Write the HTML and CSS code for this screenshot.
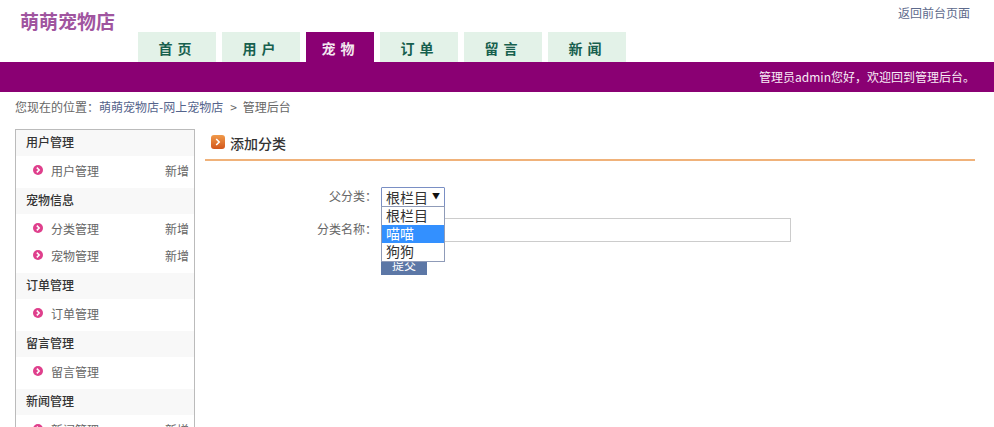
FILE: index.html
```html
<!DOCTYPE html>
<html lang="zh-CN">
<head>
<meta charset="utf-8">
<title>萌萌宠物店</title>
<link rel="stylesheet" href="styles.css">
</head>
<body>
<header class="top">
  <div class="brand">萌萌宠物店</div>
  <nav class="tabs">
    <a class="tab">首 页</a>
    <a class="tab">用 户</a>
    <a class="tab tab-active">宠 物</a>
    <a class="tab">订 单</a>
    <a class="tab">留 言</a>
    <a class="tab">新 闻</a>
  </nav>
  <a class="back">返回前台页面</a>
</header>
<div class="bar">管理员admin您好，欢迎回到管理后台。</div>
<div class="crumb">您现在的位置：<a class="link">萌萌宠物店-网上宠物店</a><span class="sep">&gt;</span>管理后台</div>
<div class="main">
  <aside class="side">
    <h3 class="group">用户管理</h3>
    <ul class="items">
      <li class="item"><svg class="dot" viewBox="0 0 10 10"><circle cx="5" cy="5" r="5"/><path d="M3.8 2.6 6.2 5 3.8 7.4"/></svg><span class="name">用户管理</span><span class="add">新增</span></li>
    </ul>
    <h3 class="group">宠物信息</h3>
    <ul class="items">
      <li class="item"><svg class="dot" viewBox="0 0 10 10"><circle cx="5" cy="5" r="5"/><path d="M3.8 2.6 6.2 5 3.8 7.4"/></svg><span class="name">分类管理</span><span class="add">新增</span></li>
      <li class="item"><svg class="dot" viewBox="0 0 10 10"><circle cx="5" cy="5" r="5"/><path d="M3.8 2.6 6.2 5 3.8 7.4"/></svg><span class="name">宠物管理</span><span class="add">新增</span></li>
    </ul>
    <h3 class="group">订单管理</h3>
    <ul class="items">
      <li class="item"><svg class="dot" viewBox="0 0 10 10"><circle cx="5" cy="5" r="5"/><path d="M3.8 2.6 6.2 5 3.8 7.4"/></svg><span class="name">订单管理</span></li>
    </ul>
    <h3 class="group">留言管理</h3>
    <ul class="items">
      <li class="item"><svg class="dot" viewBox="0 0 10 10"><circle cx="5" cy="5" r="5"/><path d="M3.8 2.6 6.2 5 3.8 7.4"/></svg><span class="name">留言管理</span></li>
    </ul>
    <h3 class="group">新闻管理</h3>
    <ul class="items">
      <li class="item"><svg class="dot" viewBox="0 0 10 10"><circle cx="5" cy="5" r="5"/><path d="M3.8 2.6 6.2 5 3.8 7.4"/></svg><span class="name">新闻管理</span><span class="add">新增</span></li>
    </ul>
  </aside>
  <section class="content">
    <h2 class="title"><svg class="title-icon" viewBox="0 0 14 14"><defs><linearGradient id="g" x1="0" y1="0" x2="0" y2="1"><stop offset="0" stop-color="#f09a4a"/><stop offset="1" stop-color="#d2561c"/></linearGradient></defs><rect width="14" height="14" rx="3" fill="url(#g)"/><path d="M5.2 4 8.2 7 5.2 10" fill="none" stroke="#fff" stroke-width="1.6"/></svg>添加分类</h2>
    <form class="form">
      <div class="row row-select">
        <span class="label">父分类：</span>
        <div class="select">
          <div class="select-box">根栏目<span class="caret">▼</span></div>
          <ul class="menu">
            <li class="opt">根栏目</li>
            <li class="opt opt-hover">喵喵</li>
            <li class="opt">狗狗</li>
          </ul>
        </div>
      </div>
      <div class="row row-input">
        <span class="label">分类名称：</span>
        <div class="input"></div>
      </div>
      <div class="row row-btn">
        <span class="label"></span>
        <div class="btn">提交</div>
      </div>
    </form>
  </section>
</div>
</body>
</html>
```
FILE: styles.css
```css
* { box-sizing: border-box; }
html, body { margin: 0; padding: 0; }
body {
  height: 427px;
  overflow: hidden;
  background: #fff;
  color: #666;
  font: 12px/18px "Noto Sans CJK SC", "Liberation Sans", sans-serif;
}
ul { list-style: none; margin: 0; padding: 0; }
h2, h3 { margin: 0; }

.top { position: relative; height: 62px; display: flex; align-items: flex-end; padding-left: 138px; }
.brand {
  position: absolute; left: 20px; top: 7px;
  font-size: 19px; line-height: 28px; font-weight: 700; color: #a0559f;
}
.tabs { display: flex; gap: 6px; }
.tab {
  width: 78px; height: 30px; background: #e3f2e8; color: #17604e; padding-right: 4px;
  font-size: 14px; line-height: 32px; font-weight: 700; text-align: center; word-spacing: 2px;
}
.tab-active { width: 68px; background: #8a0073; color: #f4e8f0; }
.back { position: absolute; right: 24px; top: 4px; color: #5d6a8c; }

.bar {
  height: 30px; background: #8a0073; color: #f9ecf6;
  text-align: right; padding-right: 19px; line-height: 30px;
}
.crumb { height: 37px; padding: 6px 0 0 15px; color: #666; }
.link { color: #55648c; }
.sep { margin: 0 6px 0 7px; }

.main { display: flex; align-items: flex-start; padding-left: 15px; }
.side { width: 180px; border: 1px solid #bbb; border-bottom: 0; height: 298px; flex: none; overflow: hidden; }
.group {
  height: 26px; background: #f8f8f8; padding-left: 10px;
  font-size: 12px; line-height: 24px; font-weight: 500; color: #333;
}
.items { padding: 2px 0 3px; }
.item { display: flex; align-items: center; height: 27px; padding: 0 5px 2px 17px; }
.dot { width: 10px; height: 10px; flex: none; margin: -2px 8px 0 0; fill: #df3f8c; }
.dot path { fill: none; stroke: #fff; stroke-width: 1.5; }
.name { flex: 1; }

.content { flex: 1; padding: 0 19px 0 10px; }
.title {
  display: flex; align-items: center; height: 32px;
  border-bottom: 2px solid #f0b27a; padding: 0 0 2px 6px;
  font-size: 14px; font-weight: 500; color: #333;
}
.title-icon { width: 14px; height: 14px; margin: -3px 5px 0 0; }
.form { padding-top: 26px; }
.row { display: flex; }
.label { width: 172px; text-align: right; flex: none; }
.row-select { height: 31px; align-items: flex-start; position: relative; z-index: 1; }
.row-select .label { line-height: 17px; }
.row-input { height: 24px; }
.row-input .label { line-height: 22px; }
.select { position: relative; margin-left: 4px; width: 64px; }
.select-box {
  height: 20px; border: 1px solid #7a8fc4; border-radius: 1px; background: #fff;
  color: #333; font-size: 14px; line-height: 18px; padding-left: 4px;
}
.caret { position: absolute; right: 5px; top: 0; font-size: 8px; line-height: 17px; color: #111; }
.menu {
  position: absolute; left: 0; top: 19px; width: 64px; height: 56px;
  background: #fff; border: 1px solid #8f9bb8;
}
.opt { height: 18px; line-height: 17px; padding-left: 4px; font-size: 14px; color: #333; }
.opt-hover { background: #3390ff; color: #fff; }
.input { margin-left: 4px; width: 410px; height: 24px; border: 1px solid #ccc; background: #fff; }
.row-btn { height: 20px; margin-top: 13px; }
.btn {
  margin-left: 4px; width: 46px; height: 20px; background: #5c77a6;
  color: #fff; text-align: center; line-height: 20px;
}
```
